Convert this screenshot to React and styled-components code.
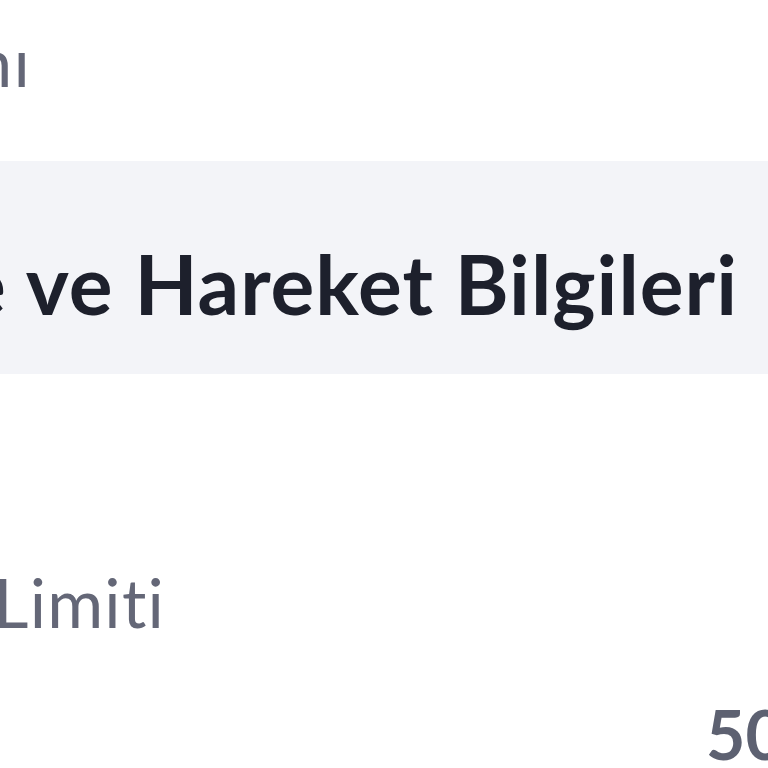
import React from 'react';
import styled, { createGlobalStyle } from 'styled-components';

const GlobalStyle = createGlobalStyle`
  html, body {
    margin: 0;
    padding: 0;
    background: #ffffff;
  }
  body {
    font-family: Lato, "Noto Sans", sans-serif;
    font-variant-ligatures: none;
    overflow: hidden;
  }
`;

const Page = styled.div`
  width: 768px;
  height: 768px;
  overflow: hidden;
  display: flex;
  flex-direction: column;
`;

const LabelRow = styled.div`
  width: ${(p) => p.$end}px;
  display: flex;
  justify-content: flex-end;
  margin-top: ${(p) => p.$top}px;
`;

const Label = styled.span`
  font-size: 68px;
  line-height: 1;
  font-weight: 400;
  color: #646777;
  white-space: nowrap;
  letter-spacing: 1.2px;
`;

const Band = styled.div`
  margin-top: 66px;
  height: 215px;
  box-sizing: border-box;
  padding-top: 81px;
  background: #f3f4f8;
`;

const HeadingRow = styled.div`
  width: ${(p) => p.$end}px;
  display: flex;
  justify-content: flex-end;
`;

const Heading = styled.h2`
  margin: 0;
  font-size: 82px;
  line-height: 1;
  font-weight: 700;
  color: #1d202c;
  white-space: nowrap;
  letter-spacing: 1px;
`;

const ValueRow = styled.div`
  margin-top: 64px;
  padding-left: ${(p) => p.$start}px;
  display: flex;
`;

const Value = styled.span`
  font-size: 68px;
  line-height: 1;
  font-weight: 700;
  color: #5d6171;
  white-space: nowrap;
`;

export default function App() {
  return (
    <>
      <GlobalStyle />
      <Page>
        <LabelRow $end={31} $top={27}>
          <Label>Kart Sahibinin Unvanı</Label>
        </LabelRow>
        <Band>
          <HeadingRow $end={738}>
            <Heading>Ekstre ve Hareket Bilgileri</Heading>
          </HeadingRow>
        </Band>
        <LabelRow $end={165} $top={194}>
          <Label>Kart Limiti</Label>
        </LabelRow>
        <ValueRow $start={706}>
          <Value>50.000,00 TL</Value>
        </ValueRow>
      </Page>
    </>
  );
}
